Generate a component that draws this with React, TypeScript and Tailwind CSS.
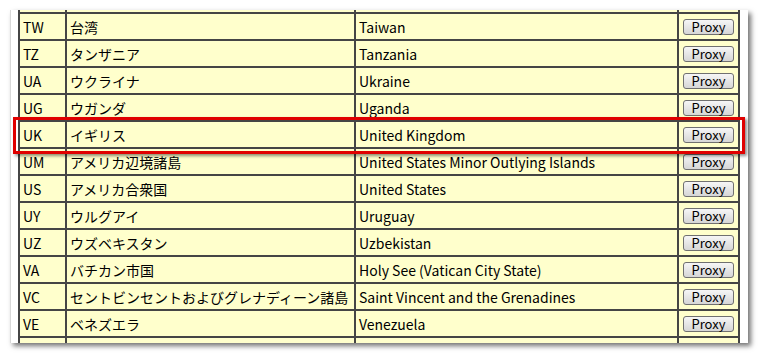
const countries: [string, string, string][] = [
  ["TW", "台湾", "Taiwan"],
  ["TZ", "タンザニア", "Tanzania"],
  ["UA", "ウクライナ", "Ukraine"],
  ["UG", "ウガンダ", "Uganda"],
  ["UK", "イギリス", "United Kingdom"],
  ["UM", "アメリカ辺境諸島", "United States Minor Outlying Islands"],
  ["US", "アメリカ合衆国", "United States"],
  ["UY", "ウルグアイ", "Uruguay"],
  ["UZ", "ウズベキスタン", "Uzbekistan"],
  ["VA", "バチカン市国", "Holy See (Vatican City State)"],
  ["VC", "セントビンセントおよびグレナディーン諸島", "Saint Vincent and the Grenadines"],
  ["VE", "ベネズエラ", "Venezuela"],
];

const cell = "border-2 border-[#454545] px-[3px] align-middle whitespace-nowrap";

// rows scrolled past the top / bottom edge of the panel
const EdgeRow = () => (
  <tr className="h-[27px]">
    <td className={cell} />
    <td className={cell} />
    <td className={cell} />
    <td className={cell} />
  </tr>
);

const App = () => {
  return (
    <div className="w-[759px] h-[354px] bg-white relative overflow-hidden font-['Noto_Sans_CJK_JP','Noto_Sans',sans-serif] text-black">
      <div className="ml-[10px] mt-[10px] w-[738px] h-[333px] bg-white border-l border-[#d8d8d8] shadow-[3px_3px_5px_rgba(0,0,0,0.55)] overflow-hidden pl-[7px]">
        <table className="-mt-[25px] w-[720px] table-fixed border-collapse bg-[#ffffcc] text-[14px] leading-none">
          <colgroup>
            <col className="w-[47px]" />
            <col className="w-[289px]" />
            <col className="w-[323px]" />
            <col className="w-[61px]" />
          </colgroup>
          <tbody>
            <EdgeRow />
            {countries.map(([code, ja, en]) => (
              <tr key={code} className="h-[27px]">
                <td className={cell}>{code}</td>
                <td className={cell}>{ja}</td>
                <td className={cell}>{en}</td>
                <td className={`${cell} text-center`}>
                  <button className="w-[51px] h-[16px] rounded-[3px] border border-[#707070] bg-gradient-to-b from-[#f6f6f6] to-[#d6d6d6] text-[13px] leading-none">
                    Proxy
                  </button>
                </td>
              </tr>
            ))}
            <EdgeRow />
          </tbody>
        </table>
      </div>
      {/* highlight around the selected row */}
      <div className="absolute left-[13px] top-[117px] w-[732px] h-[37px] border-[3px] border-[#e00000] shadow-[2px_2px_3px_rgba(0,0,0,0.45)]" />
    </div>
  );
};

export default App;
